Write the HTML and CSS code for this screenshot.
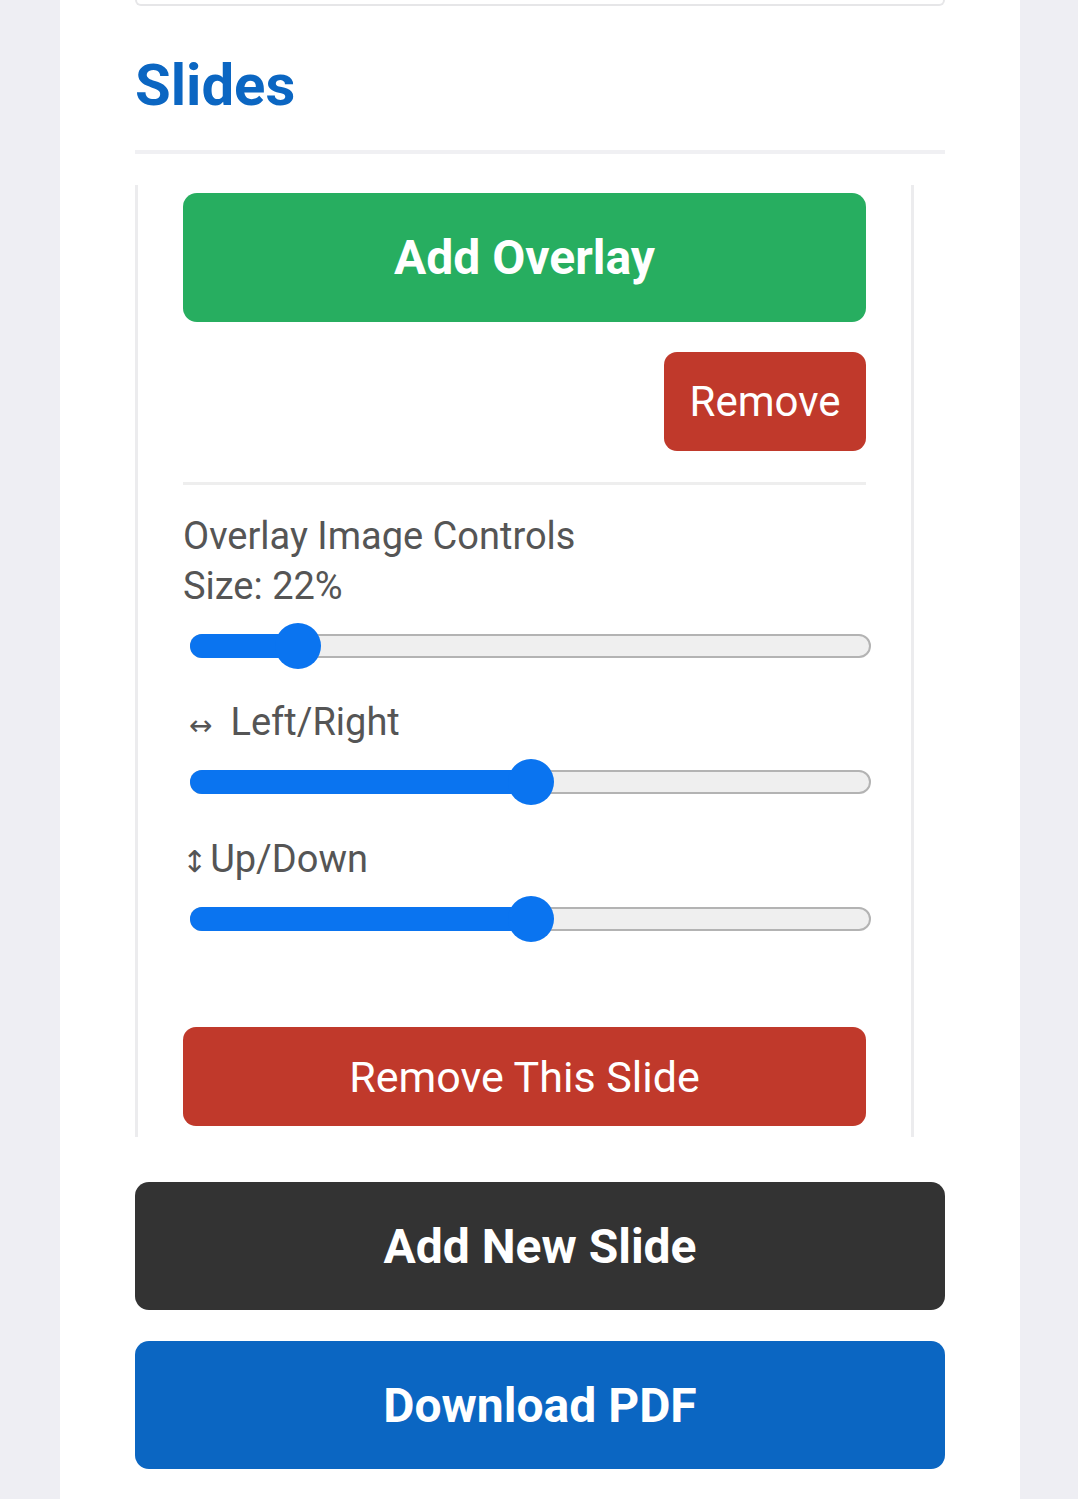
FILE: index.html
```html
<!DOCTYPE html>
<html lang="en">
<head>
<meta charset="utf-8">
<title>Slides</title>
<link rel="stylesheet" href="styles.css">
</head>
<body>
<main class="page">
  <div class="prev-card"></div>
  <h2 class="section-title">Slides</h2>
  <div class="divider"></div>

  <section class="slide">
    <button class="btn btn-green btn-big">Add Overlay</button>
    <div class="remove-row">
      <button class="btn btn-red btn-small">Remove</button>
    </div>
    <div class="rule"></div>

    <div class="controls">
      <div class="label">Overlay Image Controls</div>
      <div class="label">Size: 22%</div>
      <div class="slider" style="--p:0.1333">
        <div class="track"></div>
        <div class="fill"></div>
        <div class="thumb"></div>
      </div>

      <div class="label group"><span class="arrow arrow-h">↔</span>Left/Right</div>
      <div class="slider" style="--p:0.5">
        <div class="track"></div>
        <div class="fill"></div>
        <div class="thumb"></div>
      </div>

      <div class="label group group-last"><span class="arrow arrow-v">↕</span>Up/Down</div>
      <div class="slider" style="--p:0.5">
        <div class="track"></div>
        <div class="fill"></div>
        <div class="thumb"></div>
      </div>
    </div>

    <button class="btn btn-red btn-wide">Remove This Slide</button>
  </section>

  <button class="btn btn-dark btn-full">Add New Slide</button>
  <button class="btn btn-blue btn-full btn-last">Download PDF</button>
</main>
</body>
</html>
```

FILE: styles.css
```css
* {
  box-sizing: border-box;
}

html, body {
  margin: 0;
  padding: 0;
}

body {
  background: #eeeef3;
  font-family: Roboto, "Liberation Sans", sans-serif;
  min-height: 1499px;
}

.page {
  width: 960px;
  margin-left: 60px;
  min-height: 1499px;
  background: #ffffff;
  padding: 0 75px;
  display: flex;
  flex-direction: column;
  align-items: flex-start;
}

.prev-card {
  width: 810px;
  height: 6px;
  border: 2px solid #e6e6e8;
  border-top: none;
  border-radius: 0 0 14px 14px;
}

.section-title {
  margin: 44px 0 0 0;
  font-size: 58px;
  line-height: 70px;
  font-weight: 700;
  color: #0b66c2;
}

.divider {
  width: 810px;
  height: 4px;
  margin-top: 30px;
  background: #f0f0f3;
}

.slide {
  width: 779px;
  margin-top: 31px;
  border-left: 3px solid #ececee;
  border-right: 3px solid #ececee;
  padding: 8px 45px 11px 45px;
  display: flex;
  flex-direction: column;
}

.btn {
  border: none;
  color: #ffffff;
  font-family: Roboto, "Liberation Sans", sans-serif;
  display: flex;
  align-items: center;
  justify-content: center;
  padding: 0;
  cursor: pointer;
}

.btn-big {
  width: 100%;
  height: 129px;
  border-radius: 14px;
  font-size: 48px;
  font-weight: 700;
}

.btn-green {
  background: #27ae60;
}

.btn-red {
  background: #c0392b;
}

.btn-dark {
  background: #333333;
}

.btn-blue {
  background: #0b66c2;
}

.remove-row {
  margin-top: 30px;
  display: flex;
  justify-content: flex-end;
}

.btn-small {
  width: 202px;
  height: 99px;
  border-radius: 13px;
  font-size: 42px;
  font-weight: 400;
}

.rule {
  margin-top: 31px;
  height: 3px;
  background: #eeeeee;
}

.controls {
  margin-top: 26px;
  display: flex;
  flex-direction: column;
}

.label {
  display: block;
  height: 50px;
  font-size: 38px;
  line-height: 50px;
  color: #555555;
  white-space: nowrap;
}

.label.group {
  margin-top: 28px;
}

.label.group-last {
  margin-top: 29px;
}

.arrow {
  display: inline-block;
  font-family: "DejaVu Sans", sans-serif;
  font-size: 28px;
  line-height: 1;
  vertical-align: baseline;
  color: #555555;
}

.arrow-h {
  margin-left: 6px;
  margin-right: 18px;
}

.arrow-v {
  margin-left: -1px;
  margin-right: 3px;
  font-size: 30px;
}

.slider {
  position: relative;
  width: 681px;
  height: 46px;
  margin: 12px 0 0 7px;
}

.track {
  position: absolute;
  left: 0;
  right: 0;
  top: 11px;
  height: 24px;
  border: 2px solid #b3b3b3;
  border-radius: 12px;
  background: #efefef;
}

.fill {
  position: absolute;
  left: 0;
  top: 11px;
  height: 24px;
  border-radius: 12px;
  background: #0a74f0;
  width: calc(var(--p) * (100% - 46px) + 23px);
}

.thumb {
  position: absolute;
  top: 0;
  width: 46px;
  height: 46px;
  border-radius: 50%;
  background: #0a74f0;
  left: calc(var(--p) * (100% - 46px));
}

.btn-wide {
  width: 100%;
  height: 99px;
  margin-top: 85px;
  border-radius: 13px;
  font-size: 43px;
  font-weight: 400;
}

.btn-full {
  width: 810px;
  height: 128px;
  margin-top: 45px;
  border-radius: 14px;
  font-size: 48px;
  font-weight: 700;
}

.btn-last {
  margin-top: 31px;
}
```
